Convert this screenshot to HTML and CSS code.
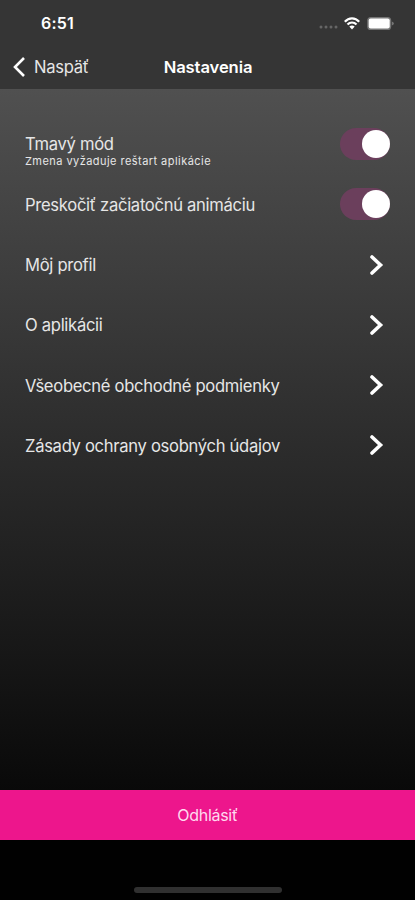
FILE: index.html
```html
<!DOCTYPE html>
<html lang="sk">
<head>
  <meta charset="utf-8">
  <title>Nastavenia</title>
  <meta name="viewport" content="width=device-width, initial-scale=1">
  <link rel="stylesheet" href="styles.css">
</head>

<body>
  <header class="topbar">
    <div class="status">
      <span class="time">6:51</span>
      <div class="status-icons">
        <svg class="signal" width="19" height="4" viewBox="0 0 19 4">
          <g fill="#666">
            <circle cx="2" cy="2" r="1.5"/>
            <circle cx="7" cy="2" r="1.5"/>
            <circle cx="12" cy="2" r="1.5"/>
            <circle cx="17" cy="2" r="1.5"/>
          </g>
        </svg>
        <svg class="wifi" width="16" height="13" viewBox="0 0 16 13">
          <g fill="none" stroke="#fff" stroke-width="2.2">
            <path d="M0.8 4.8 C4.8 0.2 11.2 0.2 15.2 4.8"/>
            <path d="M3.5 7.5 C6 4.8 10 4.8 12.5 7.5"/>
          </g>
          <path d="M5.3 9.6 Q8 7.4 10.7 9.6 L8 12.6 Z" fill="#fff"/>
        </svg>
        <svg class="battery" width="27" height="13" viewBox="0 0 27 13">
          <rect x="0.2" y="0" width="24" height="13" rx="3.6" fill="#757575"/>
          <rect x="1.7" y="1.6" width="21" height="9.8" rx="2" fill="#fff"/>
          <path d="M24.8 4.4 Q26.8 5 26.8 6.5 T24.8 8.6 Z" fill="#757575"/>
        </svg>
      </div>
    </div>
    <nav class="nav">
      <a class="back" href="#">
        <svg width="12" height="20" viewBox="0 0 12 20">
          <path d="M11 1 L2 10 L11 19" fill="none" stroke="#fff" stroke-width="2.6"/>
        </svg>
        <span>Naspäť</span>
      </a>
      <h1>Nastavenia</h1>
    </nav>
  </header>

  <main class="settings">
    <div class="row">
      <div class="label">
        <span>Tmavý mód</span>
        <small>Zmena vyžaduje reštart aplikácie</small>
      </div>
      <div class="switch"></div>
    </div>
    <div class="row">
      <span>Preskočiť začiatočnú animáciu</span>
      <div class="switch"></div>
    </div>
    <a class="row" href="#">
      <span>Môj profil</span>
      <svg class="arrow" width="14" height="20" viewBox="0 0 14 20"><path d="M2 2 L10.5 10 L2 18"/></svg>
    </a>
    <a class="row" href="#">
      <span>O aplikácii</span>
      <svg class="arrow" width="14" height="20" viewBox="0 0 14 20"><path d="M2 2 L10.5 10 L2 18"/></svg>
    </a>
    <a class="row" href="#">
      <span>Všeobecné obchodné podmienky</span>
      <svg class="arrow" width="14" height="20" viewBox="0 0 14 20"><path d="M2 2 L10.5 10 L2 18"/></svg>
    </a>
    <a class="row" href="#">
      <span>Zásady ochrany osobných údajov</span>
      <svg class="arrow" width="14" height="20" viewBox="0 0 14 20"><path d="M2 2 L10.5 10 L2 18"/></svg>
    </a>
  </main>

  <button class="logout">Odhlásiť</button>
  <footer class="home">
    <div class="home-bar"></div>
  </footer>
</body>
</html>
```
FILE: styles.css
```css
* {
  box-sizing: border-box;
}
body {
  margin: 0;
  height: 900px;
  display: flex;
  flex-direction: column;
  overflow: hidden;
  font-family: Inter, "Liberation Sans", sans-serif;
  font-size: 16.6px;
  letter-spacing: -0.3px;
  color: #e6e6e6;
  background: linear-gradient(#505050 89px, #000 880px);
}
a {
  color: inherit;
  text-decoration: none;
}

/* header */
.topbar {
  height: 89px;
  background-color: #353535;
}
.status {
  height: 45px;
  display: flex;
  justify-content: space-between;
  align-items: center;
  padding: 1px 21px 0 41px;
}
.time {
  font-size: 16px;
  font-weight: 600;
  letter-spacing: 0.2px;
  color: #fff;
}
.status-icons {
  display: flex;
  align-items: center;
}
.signal {
  margin: 8px 6px 0 0;
}
.wifi {
  margin-right: 7px;
}
.nav {
  height: 44px;
  display: grid;
  grid-template-columns: 1fr auto 1fr;
  align-items: center;
}
.back {
  display: flex;
  align-items: center;
  gap: 9px;
  padding-left: 13px;
}
h1 {
  margin: 0;
  padding-left: 1px;
  font-size: 16.6px;
  font-weight: 600;
  letter-spacing: -0.1px;
  color: #fff;
}

/* list */
.settings {
  flex: 1;
  padding: 25px 25px 0;
}
.row {
  height: 60.25px;
  display: flex;
  justify-content: space-between;
  align-items: center;
}
.row > span {
  padding-top: 1px;
}
.label {
  display: flex;
  flex-direction: column;
  padding-top: 16px;
}
.label span {
  line-height: 18px;
}
.label small {
  font-size: 11px;
  line-height: 16px;
  letter-spacing: 0.45px;
}
.switch {
  width: 50px;
  height: 32px;
  padding: 2px 0;
  border-radius: 16px;
  background-color: #6b3f5c;
}
.switch::after {
  content: "";
  display: block;
  width: 28px;
  height: 28px;
  margin-left: auto;
  border-radius: 50%;
  background-color: #fff;
}
.arrow {
  margin-right: 6px;
  fill: none;
  stroke: #fff;
  stroke-width: 3.6;
  stroke-linecap: round;
}

/* bottom */
.logout {
  height: 50px;
  padding: 0;
  border: none;
  font: inherit;
  font-size: 16px;
  letter-spacing: inherit;
  color: #ffd9ef;
  background-color: #ed168c;
}
.home {
  height: 60px;
  display: flex;
  justify-content: center;
  align-items: flex-end;
  padding-bottom: 7px;
  background-color: #010101;
}
.home-bar {
  width: 148px;
  height: 6px;
  border-radius: 3px;
  background-color: #303030;
}
```
